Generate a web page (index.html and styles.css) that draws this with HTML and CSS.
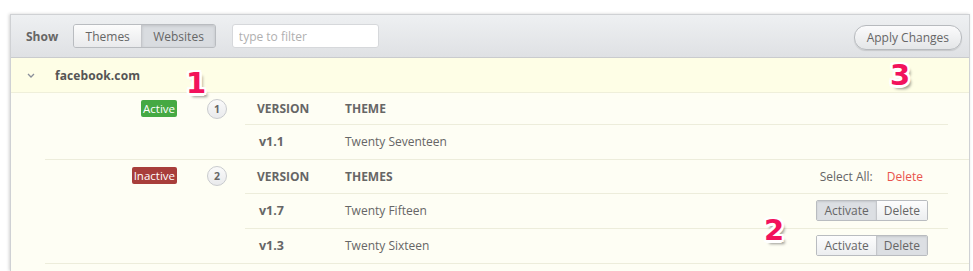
FILE: index.html
```html
<!DOCTYPE html>
<html>
<head>
<meta charset="utf-8">
<link rel="stylesheet" href="styles.css">
</head>
<body>
<div class="panel">
  <div class="toolbar">
    <span class="show">Show</span>
    <div class="seg">
      <span class="seg-btn">Themes</span>
      <span class="seg-btn on">Websites</span>
    </div>
    <input class="filter" type="text" placeholder="type to filter">
    <span class="spacer"></span>
    <span class="apply">Apply Changes</span>
  </div>
  <div class="site-head">
    <svg class="chev" width="8" height="5" viewBox="0 0 8 5"><path d="M1 1 L4 4 L7 1" fill="none" stroke="#8a8f99" stroke-width="1.3"/></svg>
    <span class="site-name">facebook.com</span>
  </div>
  <div class="site-body">
    <div class="group">
      <div class="label"><span class="badge green">Active</span></div>
      <div class="num"><span class="circle">1</span></div>
      <div class="table">
        <div class="tr th first">
          <span class="c-ver">VERSION</span><span class="c-theme">THEME</span>
        </div>
        <div class="tr last">
          <span class="c-ver b">v1.1</span><span class="c-theme">Twenty Seventeen</span>
        </div>
      </div>
    </div>
    <div class="group">
      <div class="label"><span class="badge red">Inactive</span></div>
      <div class="num"><span class="circle">2</span></div>
      <div class="table">
        <div class="tr th">
          <span class="c-ver">VERSION</span><span class="c-theme">THEMES</span>
          <span class="c-act"><span class="sel">Select All:</span><span class="del">Delete</span></span>
        </div>
        <div class="tr">
          <span class="c-ver b">v1.7</span><span class="c-theme">Twenty Fifteen</span>
          <span class="c-act"><span class="btns"><span class="bt on">Activate</span><span class="bt">Delete</span></span></span>
        </div>
        <div class="tr last">
          <span class="c-ver b">v1.3</span><span class="c-theme">Twenty Sixteen</span>
          <span class="c-act"><span class="btns"><span class="bt">Activate</span><span class="bt on">Delete</span></span></span>
        </div>
      </div>
    </div>
  </div>
  <span class="note n1">1</span>
  <span class="note n2">2</span>
  <span class="note n3">3</span>
</div>
</body>
</html>
```
FILE: styles.css
```css
html, body {
  margin: 0;
  padding: 0;
  background: #fff;
  font-family: "Open Sans", "Liberation Sans", sans-serif;
  color: #555;
  overflow: hidden;
}
.panel {
  position: relative;
  margin: 14px 3px 0 10px;
  border: 1px solid #cfd1d4;
  border-bottom: none;
  height: 256px;
  overflow: hidden;
  box-shadow: -1px 0 3px rgba(0,0,0,0.18);
}
.toolbar {
  display: flex;
  align-items: center;
  height: 42px;
  border-bottom: 1px solid #c9cbce;
  background: linear-gradient(#eef0f2, #dfe1e4);
  padding: 0 7px 0 15px;
}
.show {
  font-weight: 700;
  font-size: 12px;
  color: #666;
  margin-right: 15px;
  margin-top: 1px;
}
.seg {
  display: flex;
  height: 22px;
  border: 1px solid #b9bcc0;
  border-radius: 3px;
  overflow: hidden;
}
.seg-btn {
  display: flex;
  align-items: center;
  padding: 0 11px;
  font-size: 12px;
  color: #666;
  background: linear-gradient(#fcfcfc, #e9eaec);
}
.seg-btn:first-child { width: 45px; justify-content: center; border-right: 1px solid #c4c6ca; }
.seg-btn.on {
  background: #d9dce0;
  box-shadow: inset 0 1px 3px rgba(0,0,0,0.12);
}
.filter {
  margin-left: 16px;
  width: 147px;
  box-sizing: border-box;
  height: 24px;
  border: 1px solid #d6d8db;
  border-radius: 3px;
  padding: 0 6px;
  font-family: "Open Sans", sans-serif;
  font-size: 12px;
  color: #555;
  outline: none;
}
.filter::placeholder { color: #b0b0b0; }
.spacer { flex: 1; }
.apply {
  height: 23px;
  display: flex;
  align-items: center;
  padding: 0 12px;
  border: 1px solid #b7babe;
  border-radius: 12px;
  background: linear-gradient(#fbfbfc, #e4e6e8);
  box-shadow: 0 1px 1px rgba(0,0,0,0.12);
  font-size: 12px;
  color: #666;
  margin-top: 2px;
}
.site-head {
  display: flex;
  align-items: center;
  height: 34px;
  background: #fefee6;
  border-bottom: 1px solid #efefda;
}
.chev { margin-left: 16px; margin-right: 20px; margin-top: 1px; }
.site-name {
  font-weight: 700;
  font-size: 12px;
  color: #555;
  letter-spacing: 0.1px;
}
.site-body {
  background: #fefef4;
  padding-left: 34px;
  height: 200px;
}
.group {
  display: flex;
  border-bottom: 1px solid #ededdb;
}
.label {
  width: 132px;
  display: flex;
  justify-content: flex-end;
  padding-top: 7px;
}
.badge {
  display: inline-block;
  height: 17px;
  line-height: 17px;
  padding: 0 2px;
  border-radius: 2px;
  color: #fff;
  font-size: 11.5px;
}
.badge.green { background: #45a943; }
.badge.red { background: #a83e3b; }
.num {
  width: 38px;
  padding-left: 30px;
  display: flex;
  padding-top: 6px;
}
.circle {
  width: 18px;
  height: 18px;
  border: 1px solid #c9cbce;
  border-radius: 50%;
  background: linear-gradient(#fafafa, #e9eaec);
  display: flex;
  align-items: center;
  justify-content: center;
  font-size: 10.5px;
  font-weight: 700;
  color: #666;
}
.table {
  width: 703px;
}
.tr {
  display: flex;
  align-items: center;
  height: 32px;
  padding-bottom: 2px;
  border-bottom: 1px solid #ededdb;
  font-size: 12px;
  color: #666;
}
.tr.th { font-weight: 700; font-size: 12px; color: #666; height: 33px; padding-bottom: 0; }
.tr.th.first { height: 31px; }
.tr.last { border-bottom: none; }
.c-ver { width: 88px; padding-left: 12px; }
.c-ver.b { font-weight: 700; padding-left: 14px; width: 86px; font-size: 12.5px; }
.c-theme { flex: 1; }
.c-act { padding-right: 20px; display: flex; align-items: center; }
.sel { font-weight: 400; font-size: 12px; color: #666; margin-right: 14px; }
.del { font-weight: 400; font-size: 12px; color: #e9524d; margin-right: 5px; }
.btns {
  display: flex;
  border: 1px solid #b9bcc0;
  border-radius: 2px;
  height: 19px;
  overflow: hidden;
  margin-top: 1px;
}
.bt {
  display: flex;
  align-items: center;
  padding: 0 7px;
  font-size: 12px;
  color: #666;
  background: linear-gradient(#fdfdfd, #eceef0);
}
.bt:first-child { border-right: 1px solid #c4c6ca; }
.bt.on { background: #dcdfe3; box-shadow: inset 0 1px 2px rgba(0,0,0,0.1); }
.note {
  position: absolute;
  font-family: "DejaVu Sans", sans-serif;
  font-weight: 700;
  font-size: 29px;
  line-height: 30px;
  color: #f2125c;
  text-shadow:
    -2px -2px 0 #fff, 2px -2px 0 #fff, -2px 2px 0 #fff, 2px 2px 0 #fff,
    0 -2.5px 0 #fff, 0 2.5px 0 #fff, -2.5px 0 0 #fff, 2.5px 0 0 #fff,
    3px 4px 3px rgba(0,0,0,0.4);
}
.n1 { left: 175px; top: 53px; }
.n2 { left: 753px; top: 200px; }
.n3 { left: 879px; top: 45px; }
```
